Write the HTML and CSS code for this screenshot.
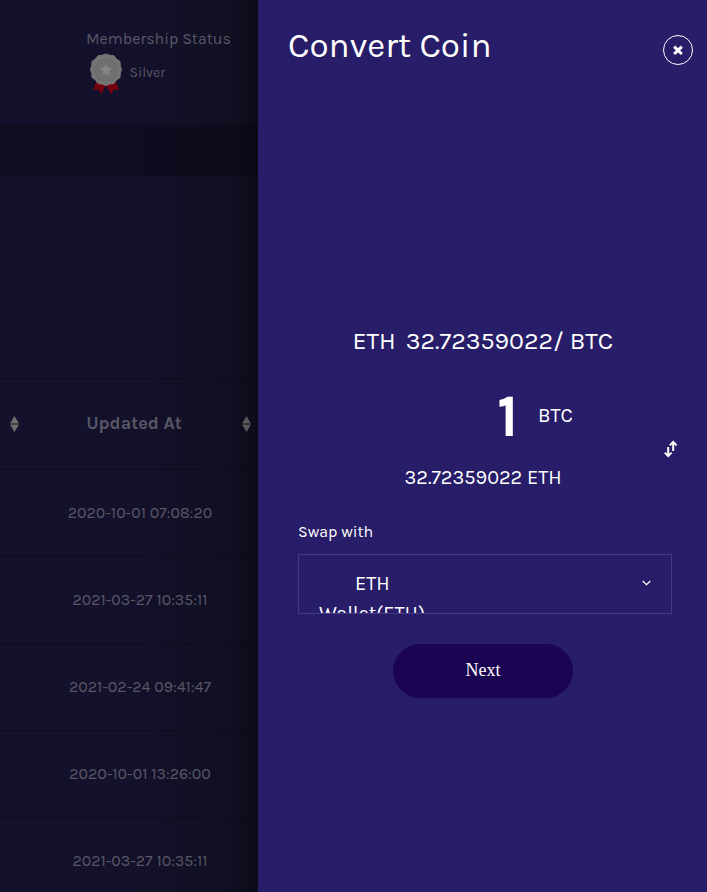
FILE: index.html
```html
<!DOCTYPE html>
<html lang="en">
<head>
<meta charset="utf-8">
<title>Convert Coin</title>
<link rel="stylesheet" href="styles.css">
</head>
<body>
<div class="app">
  <main class="page">
    <header class="membership">
      <div class="membership-title"><span>Membership Status</span></div>
      <div class="membership-level">
        <svg class="medal" width="34" height="42" viewBox="0 0 34 42">
          <path fill="#75000f" d="M7 27L3 37L8.500 36.500L11.500 41L16 32L21 41L24 36.500L29 37L25 27Z"/>
          <path fill="#747474" stroke="#747474" stroke-linejoin="round" d="M16 1L20 2.300L24 2.800L26.500 6L30 8.500L30.300 12.500L31.500 16.500L30.300 20.500L30 24.500L26.500 27L24 30.500L20 31L16 32.500L12 31L8 30.500L5.500 27L2 24.500L1.700 20.500L.5 16.500L1.700 12.500L2 8.500L5.500 6L8 2.800L12 2.300Z"/>
          <circle cx="16" cy="17" r="11.200" fill="#707070" stroke="#696969"/>
          <path fill="#858585" d="M16 10.500L17.900 14.600L22.200 15.100L19 18.200L19.900 22.600L16 20.400L12.100 22.600L13 18.200L9.800 15.100L14.100 14.600Z"/>
        </svg>
        <span class="level-name">Silver</span>
      </div>
    </header>
    <div class="band"></div>
    <div class="blank"></div>
    <section class="table">
      <div class="table-head">
        <svg class="sort" width="9" height="16" viewBox="0 0 9 16"><path d="M4.500 0L9 7.500H0ZM0 8.500H9L4.500 16Z"/></svg>
        <span class="column-name">Updated At</span>
        <svg class="sort sort-shaded" width="9" height="16" viewBox="0 0 9 16"><path d="M4.500 0L9 7.500H0ZM0 8.500H9L4.500 16Z"/></svg>
      </div>
      <div class="row"><span>2020-10-01 07:08:20</span></div>
      <div class="row"><span>2021-03-27 10:35:11</span></div>
      <div class="row"><span>2021-02-24 09:41:47</span></div>
      <div class="row"><span>2020-10-01 13:26:00</span></div>
      <div class="row"><span>2021-03-27 10:35:11</span></div>
    </section>
    <div class="shade"></div>
  </main>
  <aside class="drawer">
    <div class="drawer-head">
      <h1>Convert Coin</h1>
      <button class="close" aria-label="Close"><svg width="12" height="12" viewBox="0 0 12 12"><path d="M2.200 2.600L9.800 10M9.800 2.600L2.200 10"/></svg></button>
    </div>
    <div class="rate"><span>ETH</span><span class="rate-value">32.72359022/ BTC</span></div>
    <div class="amount"><span class="amount-value">1</span><span class="amount-coin">BTC</span></div>
    <div class="converted"><span>32.72359022 ETH</span>
      <svg class="swap" width="14" height="18" viewBox="0 0 14 18"><path d="M4.200 7V16M.8 12.600L4.200 16L7.600 12.600M9.200 11V2M5.800 5.400L9.200 2L12.600 5.400"/></svg>
    </div>
    <div class="field-label">Swap with</div>
    <div class="select">
      <div class="select-text"><span class="select-coin">ETH</span><span>Wallet(ETH)</span></div>
      <svg class="chevron" width="9" height="6" viewBox="0 0 9 6"><path d="M.7 1L4.500 4.700L8.300 1"/></svg>
    </div>
    <button class="next">Next</button>
  </aside>
</div>
</body>
</html>
```
FILE: styles.css
```css
* { box-sizing: border-box; }
body { margin: 0; font-family: Karla, Roboto, sans-serif; background: #14112c; overflow: hidden; }
.app { display: flex; width: 707px; height: 892px; overflow: hidden; }
.page { position: relative; width: 258px; flex: none; background: #14112c; color: #595766; overflow: hidden; }
.page span, .page svg { position: relative; z-index: 1; }
.membership { height: 125px; padding: 29px 0 0 86px; }
.membership-title { height: 20px; line-height: 20px; font-size: 16px; white-space: nowrap; }
.membership-level { display: flex; margin: 4px 0 0 4px; }
.level-name { margin-left: 5.500px; line-height: 39px; font-size: 14px; }
.band { height: 51px; background: #100b21; }
.blank { height: 202px; }
.table-head { display: flex; align-items: center; justify-content: space-between; height: 91px; padding: 0 7px 0 10px; border-top: 1px solid #0e0b1e; }
.sort { fill: #706e6b; }
.sort-shaded { fill: #5a5855; }
.page .column-name { top: -1px; margin-left: 7px; font-size: 18px; font-weight: 700; }
.row { height: 87px; border-top: 1px solid #0e0b1e; padding-left: 22px; text-align: center; line-height: 86px; font-size: 16px; }
.shade { position: absolute; inset: 0 0 0 auto; width: 138px; background: linear-gradient(90deg, rgba(10,12,14,0), rgba(10,12,14,.22) 50%, rgba(9,10,14,.36) 80%, rgba(6,6,12,.6)); }
.drawer { width: 449px; flex: none; background: #281d68; color: #fff; }
.drawer-head { display: flex; justify-content: space-between; height: 93px; padding: 0 14px 0 30px; }
h1 { margin: 24px 0 0; font-size: 35px; line-height: 44px; font-weight: 400; }
.close { display: flex; align-items: center; justify-content: center; width: 30px; height: 30px; margin-top: 35px; padding: 0; border: 1px solid #fff; border-radius: 50%; background: none; }
.close path { fill: none; stroke: #fff; stroke-width: 3; }
.rate { display: flex; height: 40px; margin: 228px 0 0 94.500px; line-height: 40px; font-size: 25px; }
.rate-value { margin-left: 10px; white-space: nowrap; }
.amount { display: flex; align-items: center; height: 70px; margin: 19px 0 0 239px; }
.amount-value { width: 24px; padding-top: 2px; line-height: 70px; font-size: 60px; font-weight: 700; }
.amount-coin { margin-left: 17px; font-size: 20px; }
.converted { display: flex; height: 30px; margin: 13px 0 0 146.500px; line-height: 30px; font-size: 20px; }
.swap { margin: -23px 0 0 102px; fill: none; stroke: #fff; stroke-width: 2; }
.field-label { height: 20px; margin: 29px 0 0 40px; line-height: 20px; font-size: 16px; }
.select { display: flex; justify-content: space-between; width: 374px; height: 60px; margin: 12px 0 0 40px; padding: 14px 20px 0; border: 1px solid #463b82; overflow: hidden; font-size: 20px; line-height: 30px; }
.select-text { display: flex; flex-direction: column; }
.select-coin { margin-left: 36px; }
.chevron { margin-top: 11px; fill: none; stroke: #fff; stroke-width: 1.200; }
.next { display: block; width: 180px; height: 54px; margin: 30px 0 0 135px; padding: 0 0 2px; border: 0; border-radius: 27px; background: #1b0451; color: #fff; font: 18px "Liberation Serif", serif; }
```
